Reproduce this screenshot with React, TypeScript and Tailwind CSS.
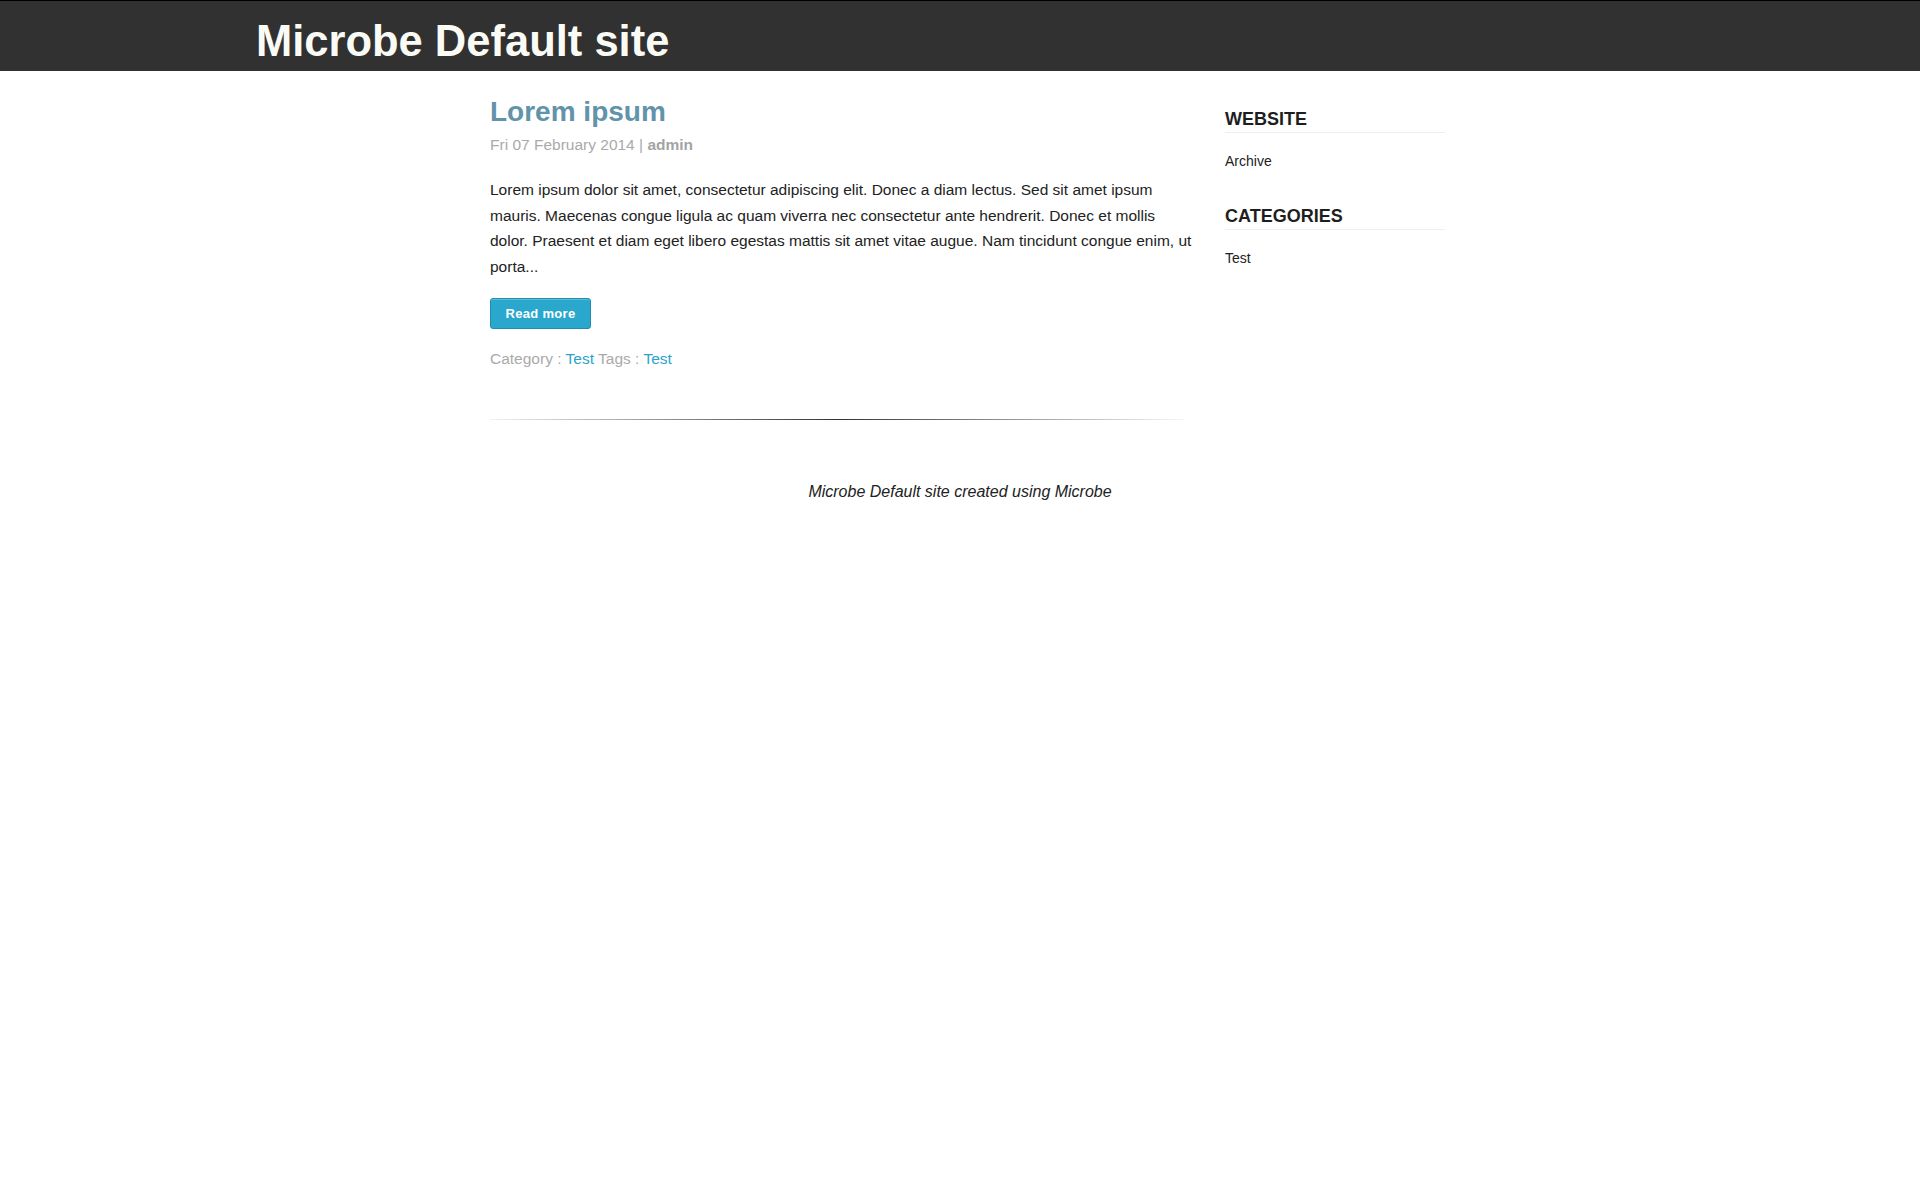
import React from "react";

const sans = { fontFamily: '"Liberation Sans", Arial, Helvetica, sans-serif' };

export default function App() {
  return (
    <div className="min-h-[1200px] bg-white" style={sans}>
      <header className="h-[71px] border-t border-black bg-[#313131]">
        <div className="mx-auto w-[1408px] pt-[16px]">
          <h1 className="text-[43.5px] leading-[48px] font-bold text-[#fbfbf6]">Microbe Default site</h1>
        </div>
      </header>

      <div className="mx-auto w-[960px] pl-[10px] grid grid-cols-[708px_220px] gap-x-[27px]">
        <main className="pt-[24px]">
          <h2 className="text-[28px] leading-[34px] font-bold text-[#6193ab]">Lorem ipsum</h2>
          <div className="mt-[6px] text-[15.5px] leading-[20px] text-[#aaaaaa]">
            Fri 07 February 2014 | <span className="font-bold text-[#a3a3a3]">admin</span>
          </div>
          <p className="mt-[22px] w-[704px] text-[15.5px] leading-[25.6px] text-[#222222]">
            Lorem ipsum dolor sit amet, consectetur adipiscing elit. Donec a diam lectus. Sed sit amet ipsum mauris. Maecenas congue ligula ac quam viverra nec consectetur ante hendrerit. Donec et mollis dolor. Praesent et diam eget libero egestas mattis sit amet vitae augue. Nam tincidunt congue enim, ut porta...
          </p>
          <button className="mt-[19px] flex h-[31px] w-[101px] items-center justify-center rounded-[3px] border border-[#1f8db2] bg-[#2aa7cc] text-[13px] font-bold tracking-[0.3px] text-white shadow-[inset_0_1px_0_rgba(255,255,255,0.25)]">
            Read more
          </button>
          <div className="mt-[20px] text-[15.5px] leading-[20px] text-[#aaaaaa]">
            Category : <span className="text-[#2aa3cc]">Test</span> Tags : <span className="text-[#2aa3cc]">Test</span>
          </div>
          <div className="mt-[50px] h-px w-[695px] bg-[linear-gradient(to_right,rgba(0,0,0,0.05),#333333_50%,rgba(0,0,0,0.03))]" />
        </main>

        <aside className="pt-[37px]">
          <h3 className="border-b border-[#eeeeee] pb-[2px] text-[18px] leading-[22px] font-bold text-[#1e1e1e]">WEBSITE</h3>
          <div className="mt-[18px] text-[14px] leading-[20px] text-[#222222]">Archive</div>
          <h3 className="mt-[34px] border-b border-[#eeeeee] pb-[2px] text-[18px] leading-[22px] font-bold text-[#1e1e1e]">CATEGORIES</h3>
          <div className="mt-[18px] text-[14px] leading-[20px] text-[#222222]">Test</div>
        </aside>
      </div>

      <footer className="mt-[62px] text-center text-[16px] leading-[20px] italic text-[#222222]">
        Microbe Default site created using Microbe
      </footer>
    </div>
  );
}
